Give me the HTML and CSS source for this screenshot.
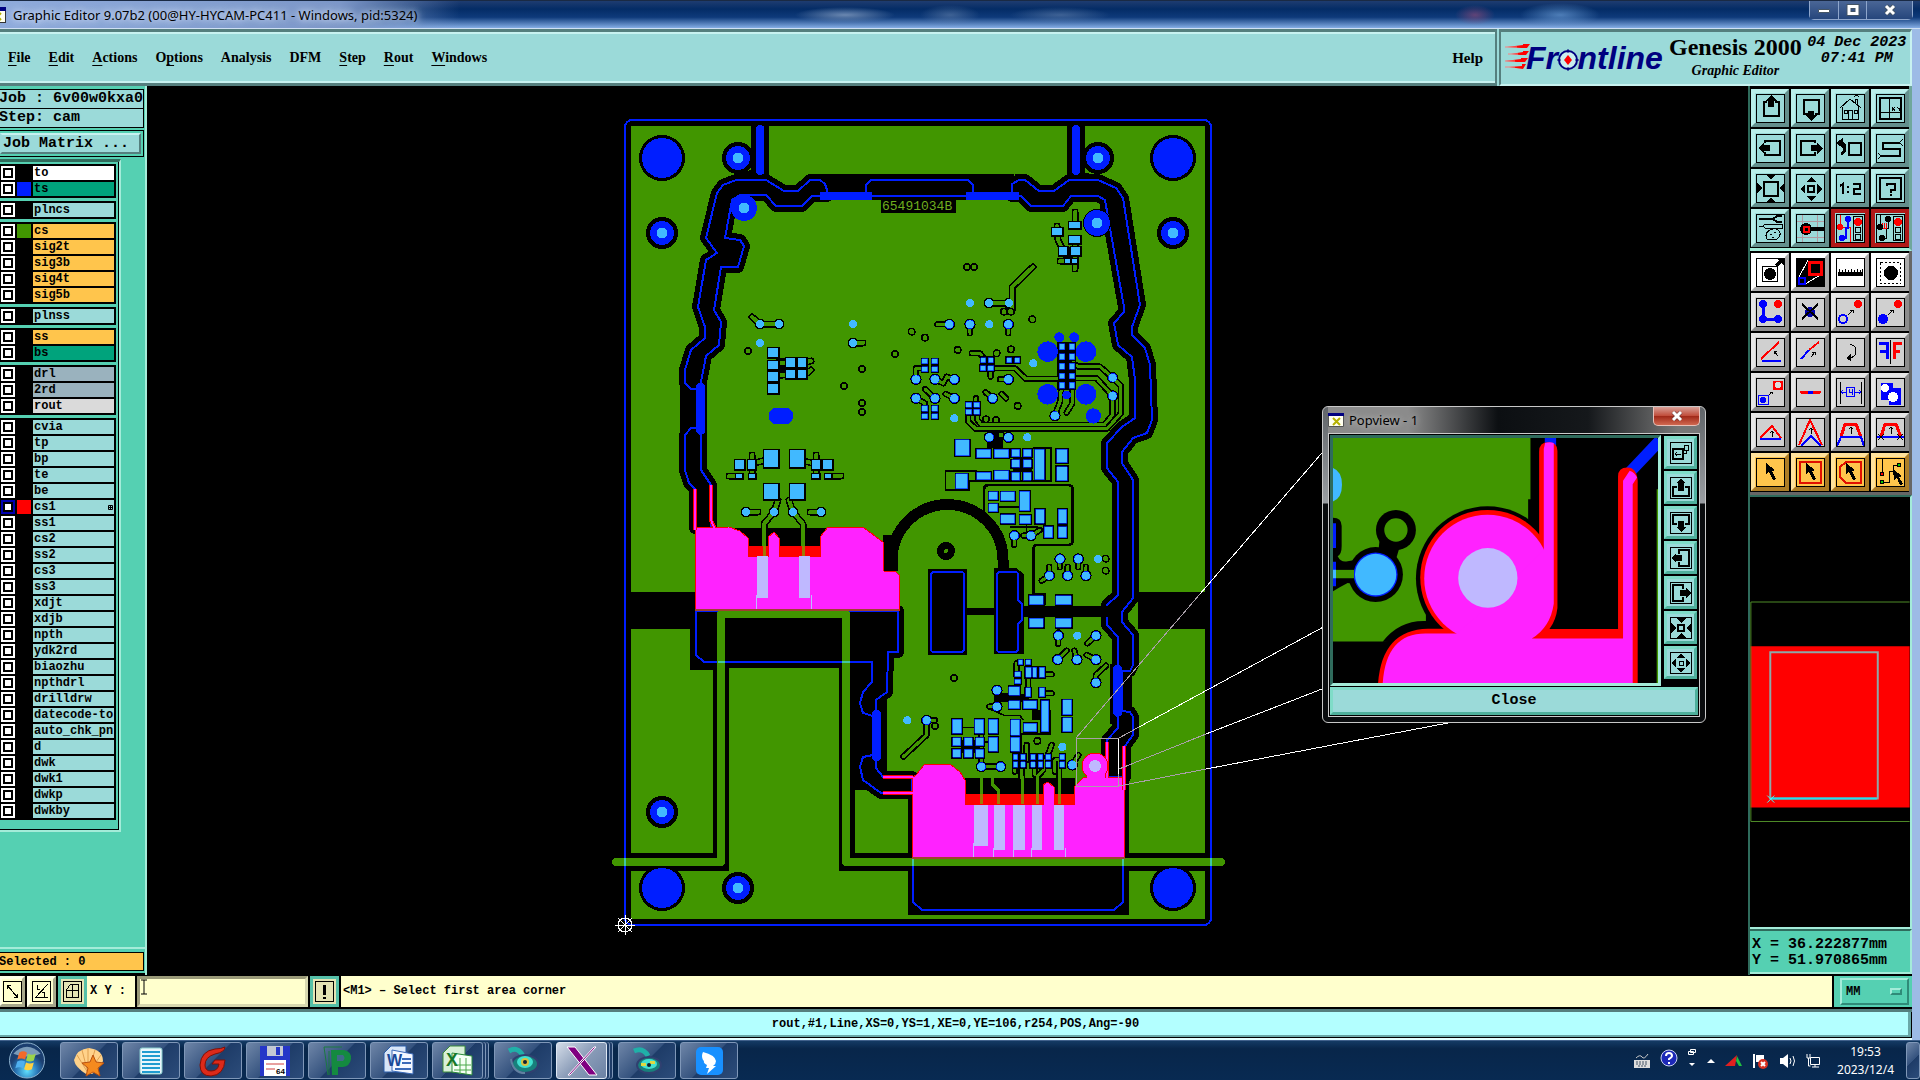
FILE: index.html
```html
<!DOCTYPE html>
<html lang="en">
<head>
<meta charset="utf-8">
<title>Graphic Editor 9.07b2</title>
<link rel="stylesheet" href="styles.css">
</head>
<body>
<header class="titlebar">
  <svg class="app-icon" width="12" height="16" viewBox="4 0 12 16"><rect width="15" height="15" x=".5" y=".5" fill="#fffff0" stroke="#333"/><path d="M0 0h16v4H0z" fill="#000080"/><path d="M4 6l7 7M11 6l-7 7" stroke="#b5b000" stroke-width="2"/></svg>
  <h1 class="title-text">Graphic Editor 9.07b2 (00@HY-HYCAM-PC411 - Windows, pid:5324)</h1>
  <div class="window-buttons">
    <button aria-label="Minimize"><svg width="14" height="12"><path d="M1.500 5.500h11v3h-11z" fill="#fff" stroke="#456"/></svg></button>
    <button aria-label="Maximize"><svg width="14" height="12"><path d="M3 2.500h8v7H3z" fill="none" stroke="#456" stroke-width="5"/><path d="M3 2.500h8v7H3z" fill="none" stroke="#fff" stroke-width="3"/></svg></button>
    <button class="wide" aria-label="Close"><svg width="14" height="12"><path d="M3 2l8 8M11 2l-8 8" stroke="#456" stroke-width="5"/><path d="M3 2l8 8M11 2l-8 8" stroke="#fff" stroke-width="3"/></svg></button>
  </div>
</header>

<div class="app">
<div class="top">
  <nav class="menubar">
    <a href="#"><u>F</u>ile</a><a href="#"><u>E</u>dit</a><a href="#"><u>A</u>ctions</a><a href="#">O<u>p</u>tions</a><a href="#">Analysis</a><a href="#">DFM</a><a href="#"><u>S</u>tep</a><a href="#"><u>R</u>out</a><a href="#"><u>W</u>indows</a>
    <a href="#" class="help">Help</a>
  </nav>
  <div class="brand">
    <svg width="162" height="36" viewBox="0 0 162 36" aria-label="Frontline">
      <g fill="#f00"><path d="M2 7l16-2V4h7l-3 4H16zM6 14l12-2v-1h6l-3 4h-6zM0 21l16-2v-1h7l-3 4h-8zM4 27l13-1v-2h4l-3 5z"/></g>
      <path d="M0 7h12M3 14h10M0 21h10M0 27h10" stroke="#fa8080"/>
      <text x="21" y="29" class="logo-text">Fr<tspan fill="none">o</tspan>ntline</text>
      <circle cx="63" cy="20" r="9" fill="#c9efee" stroke="#000080" stroke-width="2"/><path d="M63 15l4 5-4 5-4-5z" fill="#f00"/><path d="M63 9v4m0 14v4M52 20h4m14 0h4" stroke="#000080"/>
    </svg>
    <div class="product"><strong>Genesis 2000</strong><em>Graphic Editor</em></div>
    <time class="stamp">04 Dec 2023<br>07:41 PM</time>
  </div>
</div>

<div class="main">
<aside class="left">
  <div class="job"><div>Job : 6v00w0kxa0</div><div>Step: cam</div></div>
  <div class="matrix"><button>Job Matrix ...</button></div>
  <div class="layers">
    <div class="group">
      <label class="layer"><input type="checkbox"><i></i><span class="white">to</span></label>
      <label class="layer"><input type="checkbox"><i class="blue"></i><span class="green">ts</span></label>
    </div>
    <div class="group"><label class="layer"><input type="checkbox"><i></i><span>plncs</span></label></div>
    <div class="group">
      <label class="layer"><input type="checkbox"><i class="leaf"></i><span class="amber">cs</span></label>
      <label class="layer"><input type="checkbox"><i></i><span class="amber">sig2t</span></label>
      <label class="layer"><input type="checkbox"><i></i><span class="amber">sig3b</span></label>
      <label class="layer"><input type="checkbox"><i></i><span class="amber">sig4t</span></label>
      <label class="layer"><input type="checkbox"><i></i><span class="amber">sig5b</span></label>
    </div>
    <div class="group"><label class="layer"><input type="checkbox"><i></i><span>plnss</span></label></div>
    <div class="group">
      <label class="layer"><input type="checkbox"><i></i><span class="amber">ss</span></label>
      <label class="layer"><input type="checkbox"><i></i><span class="green">bs</span></label>
    </div>
    <div class="group">
      <label class="layer"><input type="checkbox"><i></i><span class="slate">drl</span></label>
      <label class="layer"><input type="checkbox"><i></i><span class="slate">2rd</span></label>
      <label class="layer"><input type="checkbox"><i></i><span class="pale">rout</span></label>
    </div>
    <div class="group">
      <label class="layer"><input type="checkbox"><i></i><span>cvia</span></label>
      <label class="layer"><input type="checkbox"><i></i><span>tp</span></label>
      <label class="layer"><input type="checkbox"><i></i><span>bp</span></label>
      <label class="layer"><input type="checkbox"><i></i><span>te</span></label>
      <label class="layer"><input type="checkbox"><i></i><span>be</span></label>
      <label class="layer"><input type="checkbox" class="current"><i class="red"></i><span class="work">cs1<svg width="5" height="5" viewBox="0 0 5 5"><path d="M.5.5h4v4h-4zM2.500 0v5M0 2.500h5" fill="none" stroke="#000"/></svg></span></label>
      <label class="layer"><input type="checkbox"><i></i><span>ss1</span></label>
      <label class="layer"><input type="checkbox"><i></i><span>cs2</span></label>
      <label class="layer"><input type="checkbox"><i></i><span>ss2</span></label>
      <label class="layer"><input type="checkbox"><i></i><span>cs3</span></label>
      <label class="layer"><input type="checkbox"><i></i><span>ss3</span></label>
      <label class="layer"><input type="checkbox"><i></i><span>xdjt</span></label>
      <label class="layer"><input type="checkbox"><i></i><span>xdjb</span></label>
      <label class="layer"><input type="checkbox"><i></i><span>npth</span></label>
      <label class="layer"><input type="checkbox"><i></i><span>ydk2rd</span></label>
      <label class="layer"><input type="checkbox"><i></i><span>biaozhu</span></label>
      <label class="layer"><input type="checkbox"><i></i><span>npthdrl</span></label>
      <label class="layer"><input type="checkbox"><i></i><span>drilldrw</span></label>
      <label class="layer"><input type="checkbox"><i></i><span>datecode-to</span></label>
      <label class="layer"><input type="checkbox"><i></i><span>auto_chk_pnl</span></label>
      <label class="layer"><input type="checkbox"><i></i><span>d</span></label>
      <label class="layer"><input type="checkbox"><i></i><span>dwk</span></label>
      <label class="layer"><input type="checkbox"><i></i><span>dwk1</span></label>
      <label class="layer"><input type="checkbox"><i></i><span>dwkp</span></label>
      <label class="layer"><input type="checkbox"><i></i><span>dwkby</span></label>
    </div>
  </div>
  <div class="filler"></div>
  <div class="selected"><div>Selected : 0</div></div>
</aside>

<section class="canvas">
<svg class="board" viewBox="147 86 1601 889" preserveAspectRatio="xMinYMin meet">
  <defs>
    <path id="channel-left" d="M827 196V190L825 184 820 180H810L798 191H784L766 180H736L723 185 717 193 706 238 717 253 706 260 698 307 705 327V338L691 350 685 370V383L691 389H701V428H691L685 435V470L689 483 695 489V528H711V485L701 470V382L706 356 719 345 721 322 714 310 721 267H738L744 246 740 240 725 238 732 200 740 195H766L776 206H802L812 196Z"/>
    <path id="channel-right" d="M1012 196V184L1019 180H1025L1039 191H1054L1069 180H1098L1116 188 1123 198 1140 305 1132 327V335L1145 348 1150 365 1152 420 1147 433 1133 438 1122 452V463L1133 480V598L1122 612V622L1133 635V665L1130 671H1122V711L1130 712 1133 717V735L1125 746V777H1107V740L1118 728V637L1107 625V605L1118 595V482L1107 468V443L1122 427 1135 418V380L1132 357 1118 345 1114 323 1124 312V307L1105 200 1098 196H1071L1063 206H1031L1021 196Z"/>
    <path id="channel-mid" d="M696 611V655L704 662H872V682L863 692 860 703 863 713 873 716V755L863 757 860 767 863 780 881 793H912V777H883L876 768V700L887 692 888 652H898V611Z"/>
    <path id="plate-a" d="M695 528L729 527 740 531 748 538V556H768V537L774 532 779 538V556H820V537L828 527H863L871 533 883 542 884 571H895L899 575V610H695Z"/>
    <path id="plate-b" d="M912 778L916 775 924 765 950 764 960 772 965 780V804H1043V785L1048 782 1054 787V804H1074V787L1084 777H1124V750V858H912Z"/>
    <path id="traces" d="M275 175H345L378 207H485M520 145V160L535 170H600L638 203M515 205H590L638 258M205 320V335L228 357H620L663 310V228L640 205M232 310V330L245 345H612L638 315V260M485 225L480 275 465 315M517 225V280L500 308M148 43H112M210 43V70M325 43V70M215 130H240L255 150M272 175V200M325 208H300M48 208V175H75M105 208L130 220 140 200 163 208M75 237L105 265M137 252L163 265M48 265L75 280V300M257 247L278 265M305 252L318 265M228 265V300M480 747V772M535 747V772M448 797V770M503 797V770M558 797V770M448 797L425 812M475 977V1002M588 977L562 1000M473 1049L500 1022M531 1049L523 1022M588 1049L560 1035M588 1118V1095L618 1067M343 677V705M80 1231V1275L10 1340M80 1231H105M244 1370H302M291 1190H268M435 1093H455M430 1150H455M385 1110V1130M350 1060V1100M380 1305V1350M455 1305L440 1345M405 1365V1395M465 1385V1350H485M345 1360V1385M535 1335L517 1365M370 677H393L420 660M244 1250V1370M365 1370V1405M412 1400L430 1380V1350M478 1405V1350"/>
    <path id="vias" d="M35 65h0M75 83h0M173 120h0M397 28h0M333 118h0M290 130h0M353 288h0M258 328h0M288 330h0M312 5h0M332 5h0M617 746h0M617 782h0M162 1104h0M105 1248h0M412 1293h0M303 375h0"/>
    <path id="ringed" d="M148 43h0M210 43h0M325 43h0M48 208h0M105 208h0M163 208h0M325 208h0M48 265h0M105 265h0M163 265h0M278 265h0M638 203h0M638 258h0M465 317h0M268 382h0M325 382h0M343 677h0M393 677h0M480 747h0M535 747h0M448 797h0M503 797h0M558 797h0M475 977h0M588 977h0M473 1049h0M531 1049h0M588 1049h0M588 1118h0M291 1141h0M291 1190h0M80 1231h0M244 1370h0M302 1370h0M517 1365h0"/>
    <path id="pads" d="M478 102h17v18h-17zM508 102h17v18h-17zM478 131h17v18h-17zM508 131h17v18h-17zM478 160h17v18h-17zM508 160h17v18h-17zM478 190h17v16h-17zM508 190h17v16h-17zM478 217h17v18h-17zM508 217h17v18h-17zM66 147h18v14h-18zM96 147h18v14h-18zM66 170h18v16h-18zM96 170h18v16h-18zM66 288h18v16h-18zM96 288h18v16h-18zM66 312h18v15h-18zM96 312h18v15h-18zM243 143h15v15h-15zM265 143h15v15h-15zM241 167h17v16h-17zM264 167h17v16h-17zM320 143h15v15h-15zM344 143h15v15h-15zM198 277h17v15h-17zM222 277h17v15h-17zM198 298h17v15h-17zM222 298h17v15h-17zM166 390h42v47h-42zM230 418h43v26h-43zM283 418h43v26h-43zM335 418h24v22h-24zM370 418h24v22h-24zM405 418h28v92h-28zM470 418h32v40h-32zM335 450h24v22h-24zM370 450h24v22h-24zM470 470h32v42h-32zM230 487h43v22h-43zM283 483h43v26h-43zM335 487h24v24h-24zM370 487h24v24h-24zM168 492h36v45h-36zM267 546h26v24h-26zM303 546h42v26h-42zM360 544h30v58h-30zM267 582h26v24h-26zM303 614h42v26h-42zM360 616h32v26h-32zM407 598h26v42h-26zM433 650h26v34h-26zM475 598h26v42h-26zM475 650h26v34h-26zM388 857h42v27h-42zM468 857h46v27h-46zM388 925h42v27h-42zM468 925h46v27h-46zM355 1050h14v14h-14zM378 1050h14v14h-14zM345 1086h17v15h-17zM345 1108h17v14h-17zM377 1072h17v30h-17zM398 1072h13v30h-13zM418 1072h17v30h-17zM327 1130h32v26h-32zM377 1134h15v26h-15zM418 1134h17v26h-17zM327 1172h33v24h-33zM370 1172h40v24h-40zM424 1172h22v94h-22zM488 1170h28v44h-28zM488 1224h28v42h-28zM372 1240h38v26h-38zM157 1228h28v42h-28zM225 1228h27v42h-27zM267 1228h27v42h-27zM333 1230h27v46h-27zM158 1284h24v24h-24zM193 1284h24v24h-24zM228 1284h24v24h-24zM267 1282h27v42h-27zM333 1282h27v42h-27zM158 1318h24v24h-24zM193 1318h24v24h-24zM228 1318h24v24h-24zM340 1333h14v16h-14zM362 1333h14v16h-14zM340 1356h14v16h-14zM362 1356h14v16h-14zM392 1333h14v16h-14zM415 1333h14v16h-14zM438 1333h14v16h-14zM392 1356h14v16h-14zM415 1356h14v16h-14zM438 1356h14v16h-14zM480 1333h14v16h-14zM480 1356h14v16h-14z"/>
    <path id="pads-left" d="M768 348h10v9h-10zM768 361h10v8h-10zM768 372h10v9h-10zM768 384h10v9h-10zM786 358h9v9h-9zM798 358h8v9h-8zM786 370h9v8h-9zM798 370h8v8h-8zM764 450h14v17h-14zM790 450h14v17h-14zM735 460h9v9h-9zM748 460h7v9h-7zM812 460h8v9h-8zM823 460h9v9h-9zM736 474h6v4h-6zM749 474h6v4h-6zM812 474h7v4h-7zM825 474h6v4h-6zM764 484h14v15h-14zM790 484h14v15h-14zM1069 222h11v6h-11zM1052 228h10v7h-10zM1069 236h11v7h-11zM1059 247h8v8h-8zM1071 247h9v8h-9zM1065 259h5v4h-5zM1072 259h5v4h-5z"/>
    <path id="traces-left" d="M752 317L760 324H779M853 343H863M806 362L811 361M806 374L811 370M778 364L787 362M778 376L787 374M752 465V455M816 465V455M755 463L766 460M812 463L800 460M729 476H738M828 476H841M752 470V476M816 470V476M746 512H758M821 512H810M764 556V524L774 512 778 500M803 556V524L793 512 789 500M1033 267L1012 287V311M989 303H1009M1075 212V224M1057 226L1058 240 1063 250M1075 243V269M1060 261H1066"/>
    <path id="vias-left" d="M748 351h0M895 354h0M862 369h0M844 386h0M862 403h0M862 412h0M967 267h0M974 267h0M1007 311h0"/>
    <path id="dots-left" d="M760 324h0M779 324h0M853 343h0M746 512h0M774 512h0M793 512h0M821 512h0M989 303h0M1009 303h0"/>
  </defs>

  <path class="green" d="M631 126H1205V919H631z"/>
  <path class="black" d="M751 120h18v68h-18zM1067 120h18v68h-18zM735 176l20-8 14 20h-34zM1067 168l40 10-10 10h-30zM820 174h199v26H820zM805 184l20-10v22zM1034 184l-20-10v22zM680 382h22v56h-22zM631 592h66v37h-66zM1138 592h68v37h-68zM1110 664h22v60h-22z"/>
  <!-- milled areas and slots -->
  <path class="black" d="M713 610h142v256H713zM690 605h210v45h-12v20H690zM855 650h32v140h-32zM631 853h98v18h-98zM838 853h368v18H838zM908 793h221v122H908zM735 528h95v20h-95zM955 778h120v20h-120zM883 535h13v36h-13zM1120 745h9v120h-9z"/>
  <path class="green" d="M729 667h110v210H729zM855 790h53v63h-53z"/>
  <g class="edge">
    <use href="#channel-left" class="clearance"/><use href="#channel-right" class="clearance"/><use href="#channel-mid" class="clearance"/>
    <use href="#channel-left" class="rout"/><use href="#channel-right" class="rout"/><use href="#channel-mid" class="rout"/>
    <path class="rout" d="M866 194V185L871 180H968L973 185V194"/><path class="blue-line" d="M820 196H1020"/>
    <path class="rout" d="M913 858V902L922 910H1114L1123 902V858"/>
    <rect class="blue-line" x="625" y="120" width="586" height="805" rx="7"/>
  </g>
  <path class="blue-fill" d="M756 127q4-5 8 0v46q-4 5-8 0zM1072 127q4-5 8 0v46q-4 5-8 0zM820 192h52v8h-52zM966 192h53v8h-53zM696 385q5-5 9 0v47q-4 6-9 0zM872 712q4-5 9 0v47q-4 5-9 0zM1113 667q4-5 9 0v47q-4 6-9 0z"/>

  <!-- keyhole clip and contact slots -->
  <path d="M892 571V560A54 54 0 0 1 1003 560V575" fill="none" stroke="#000" stroke-width="11"/>
  <circle cx="946" cy="551" r="9"/><circle cx="946" cy="551" r="2" class="green"/>
  <path class="black" d="M928 569h39v86h-39zM994 568h22l8 6v80h-30zM964 608h34v7h-34zM1020 606h88v11h-88z"/>
  <rect class="rout" x="931" y="572" width="33" height="80" rx="3"/>
  <path class="rout" d="M997 575q0-3 3-3h15q3 0 3 3v25l4 4v16l-4 4v25q0 3-3 3h-15q-3 0-3-3z"/>

  <!-- tooling holes -->
  <g class="black"><circle cx="662" cy="158" r="23"/><circle cx="1173" cy="158" r="23"/><circle cx="662" cy="888" r="23"/><circle cx="1173" cy="888" r="23"/><circle cx="738" cy="158" r="16"/><circle cx="1098" cy="158" r="16"/><circle cx="662" cy="233" r="16"/><circle cx="1173" cy="233" r="16"/><circle cx="662" cy="812" r="16"/><circle cx="738" cy="888" r="16"/><circle cx="1097" cy="223" r="14"/></g>
  <g class="blue-fill"><circle cx="662" cy="158" r="20"/><circle cx="1173" cy="158" r="20"/><circle cx="662" cy="888" r="20"/><circle cx="1173" cy="888" r="20"/><circle cx="738" cy="158" r="12"/><circle cx="1098" cy="158" r="12"/><circle cx="662" cy="233" r="12"/><circle cx="1173" cy="233" r="12"/><circle cx="662" cy="812" r="12"/><circle cx="738" cy="888" r="12"/><circle cx="744" cy="208" r="13"/><circle cx="1097" cy="223" r="13"/><rect x="769" y="408" width="24" height="16" rx="7"/></g>
  <path class="dots" stroke-width="11" d="M738 158h0M1098 158h0M662 233h0M1173 233h0M662 812h0M738 888h0M744 208h0M1097 223h0"/>
  <path class="black" d="M881 197h75v16h-75z"/>
  <text x="882" y="210" class="part-no">65491034B</text>

  <!-- left half components -->
  <path class="black" d="M776 358h12v20h-12zM792 362h8v12h-8zM1063 247h16v16h-16z"/>
  <g class="net"><use href="#traces-left" stroke="#000" stroke-width="7"/><use href="#vias-left" stroke="#000" stroke-width="8"/><use href="#dots-left" stroke="#000" stroke-width="11"/><use href="#traces-left" stroke="#419600" stroke-width="4"/><use href="#vias-left" stroke="#419600" stroke-width="5"/><use href="#dots-left" stroke="#41b9ff" stroke-width="8"/><path stroke="#41b9ff" stroke-width="8" d="M760 343h0M853 324h0M970 303h0"/></g>
  <use href="#pads-left" fill="#41b9ff" stroke="#000" stroke-width="3"/><use href="#pads-left" fill="#41b9ff"/>

  <!-- right half components, drawn on a grid of thirds -->
  <g transform="translate(900 310) scale(.33333)">
    <path class="black" d="M472 96h56v145h-56zM262 366h48v48h-48zM340 440h55v45h-55zM183 1290h60v40h-60zM283 1150h60l45 5v20h-105zM395 1200h50v30h-50zM398 1340h48v22h-48zM350 1340h20v22h-20z"/>
    <path class="wire" stroke-width="5" d="M230 483H137V541H208V513H453V414H400M295 592H362M330 652H413M380 640V672M185 1253H225M365 1340V1272H450V1200M270 1197L315 1217H360L370 1230M185 1296H270M358 1110V1165H330"/>
    <path class="wire" stroke-width="8" d="M252 615V540Q252 525 267 525H503Q518 525 518 540V690Q518 705 503 705H412Q400 705 400 718V852H434V885"/>
    <path class="wire" stroke-width="9" d="M475 955V977M385 355H240"/>
    <g class="net"><use href="#traces" stroke="#000" stroke-width="19"/><use href="#vias" stroke="#000" stroke-width="24"/><use href="#ringed" stroke="#000" stroke-width="34"/><use href="#traces" stroke="#419600" stroke-width="9"/><use href="#vias" stroke="#419600" stroke-width="15"/><use href="#ringed" stroke="#001eff" stroke-width="28"/><use href="#ringed" stroke="#41b9ff" stroke-width="24"/><path stroke="#41b9ff" stroke-width="24" d="M268 43h0M400 160h0M163 325h0M382 382h0M594 747h0M532 977h0M22 1231h0M487 1311h0"/></g>
    <use href="#pads" fill="#41b9ff" stroke="#000" stroke-width="8"/><use href="#pads" fill="#41b9ff" stroke="#001eff" stroke-width="2"/>
    <g class="blue-fill"><circle cx="443" cy="125" r="31"/><circle cx="558" cy="125" r="31"/><circle cx="443" cy="253" r="31"/><circle cx="558" cy="253" r="31"/><circle cx="580" cy="318" r="23"/><circle cx="478" cy="82" r="15"/><circle cx="523" cy="82" r="15"/><circle cx="500" cy="255" r="13"/></g>
  </g>

  <!-- copper plates -->
  <path fill="#f00" d="M748 546h73v11h-73zM965 794h109v11H965z"/>
  <use href="#plate-a" class="plate"/><use href="#plate-b" class="plate"/>
  <g fill="none"><path stroke="#f00" stroke-width="4" d="M695 489V530M711 485V520L715 528M883 777H913M883 793H913M1107 742V778M1124 746V790"/><path stroke="#ff22ff" stroke-width="2" d="M695 489V530M711 485V520L715 530M883 777H913M883 793H913M1107 742V780M1124 746V790"/></g>
  <circle cx="1095" cy="766" r="13" class="plate"/><circle cx="1095" cy="766" r="6" fill="#bfb8ff"/><path fill="#ff22ff" d="M1087 774h18v10h-18z"/>
  <path fill="#bfb8ff" d="M757 556h11v42h-11zM799 556h11v42h-11zM756 595h1v15h-1zM811 595h1v15h-1zM974 805h14v41h-14zM994 805h11v45h-11zM1013 805h12v45h-12zM1032 805h10v45h-10zM1054 805h10v45h-10zM973 843h1v15h-1zM993 848h1v10h-1zM1013 848h1v10h-1zM1031 848h1v10h-1zM1065 848h1v10h-1z"/>
  <path fill="none" stroke="#419600" stroke-width="3" d="M764 528V546M803 528V546M981 772V794M992 778V784L998 790V794M1022 776V794M1037 778V794M1059 776V794"/>
  <path fill="none" stroke="#a07800" stroke-width="3" d="M764 546V556M803 546V556M981 794V804M998 794V804M1022 794V804M1037 794V804M1059 794V804"/>
  <path fill="none" stroke="#419600" stroke-width="8" stroke-linecap="round" stroke-linejoin="round" d="M616 862H721V614H846V862H1221"/>
  <path stroke="#41c8a0" stroke-width="2" d="M718 662h7M842 662h8M625 858v8M1211 858v8M913 858v8M1123 858v8"/>
  <path stroke="#a04030" stroke-width="2" d="M695 610H899M912 858H1125"/>

  <!-- magnifier frame and leader lines -->
  <g fill="none" stroke="#a9a0a9"><path d="M1076.500 738.500h42v48h-42zM1076 738L1200 594M1119 769L1206 734M1119 786L1206 769M1119 738L1139 727"/><path stroke="#fff" d="M1200 594L1340 432M1139 727L1340 618M1206 734L1340 682M1206 769L1448 723M1118.500 739v35"/></g>
  <g fill="none" stroke="#fff"><circle cx="625" cy="925" r="7"/><path d="M615 925h20M625 915v20M618 918l14 14M632 918l-14 14"/></g>
</svg>

<div class="popview" role="dialog" aria-labelledby="pop-title">
  <div class="pop-head">
    <svg width="16" height="14" viewBox="0 0 16 14"><path d="M.5.5h15v13H.5z" fill="#fffff0" stroke="#555"/><path d="M0 0h16v3H0z" fill="#000080"/><path d="M5 5l7 7M12 5l-7 7" stroke="#b5b000" stroke-width="2"/></svg>
    <h2 id="pop-title">Popview - 1</h2>
    <button class="pop-x" aria-label="Close window"><svg width="12" height="10"><path d="M2 1l8 8M10 1l-8 8" stroke="#633" stroke-width="4"/><path d="M2 1l8 8M10 1l-8 8" stroke="#fff" stroke-width="3"/></svg></button>
  </div>
  <div class="pop-body">
    <div class="pop-row">
      <svg class="pop-view" viewBox="69 117 976 732" preserveAspectRatio="none">
        <path fill="#419600" d="M69 117H662V725H69zM1041 270h4v579h-4z"/>
        <path d="M69 355q26 0 26 25v60q0 25-12 30 10 20 30 15l30-5v75l-30-5q-20 10-44 25z"/>
        <circle cx="258" cy="392" r="60"/><circle cx="258" cy="392" r="35" fill="#419600"/><circle cx="197" cy="525" r="82"/><path d="M205 460l5-50 60 30-15 50z"/><circle cx="197" cy="525" r="66" fill="#001eff"/><circle cx="197" cy="525" r="62" fill="#41b9ff"/>
        <path fill="#419600" d="M78 511h54v25H78z"/><path fill="#001eff" d="M69 372h9v74h-9zM69 487h9v73h-9z"/><path fill="#41b9ff" d="M69 511h9v25h-9zM69 207q27 10 27 50t-27 50z"/>
        <circle cx="533" cy="536" r="215"/><path d="M218 726q50-65 130-62v-30l60 60v40zM655 300h90v200h-90z"/>
        <path fill="none" stroke="#001eff" stroke-width="34" d="M722 100v40M955 225l95-100"/>
        <path fill="#f00" d="M688 158q0-28 28-28t27 28v467q-4 36-24 63h206V232q0-27 28-27t31 40v610H204q10-165 150-168h334z"/><circle cx="533" cy="534" r="202" fill="#f00"/>
        <circle cx="533" cy="536" r="190" fill="#ff22ff"/>
        <path fill="#ff22ff" d="M702 150l4-18q14-4 26 0v480q-10 70-66 104H940V245l20-30q15 5 22 20l-13 20v600H218q8-155 130-154h92l60-50 202-200z"/>
        <circle cx="534" cy="535" r="89" fill="#bfb8ff"/>
      </svg>
      <div class="pop-tools">
        <button aria-label="Pop out"><svg class="ico" viewBox="0 0 22 22"><path d="M3 7h10v10H3z" fill="none" stroke="#000" stroke-width="2"/><path d="M14.500 3.500h4v5h-4zM13 11h3V9M5 12h6M5 12l2-2M5 12l2 2" fill="none" stroke="#000"/></svg></button>
        <button aria-label="Pan up"><svg class="ico" viewBox="0 0 22 22"><path d="M7 10H3v9h16v-9h-4" fill="none" stroke="#000" stroke-width="2"/><path d="M11 2l5 4h-2v8H8V6H6z"/></svg></button>
        <button aria-label="Pan down"><svg class="ico" viewBox="0 0 22 22"><path d="M7 12H3V3h16v9h-4" fill="none" stroke="#000" stroke-width="2"/><path d="M11 20l5-5h-2V9H8v6H6z"/></svg></button>
        <button aria-label="Pan left"><svg class="ico" viewBox="0 0 22 22"><path d="M9 7V3h10v16H9v-4" fill="none" stroke="#000" stroke-width="2"/><path d="M1 11l5-5v2h6v6H6v2z"/></svg></button>
        <button aria-label="Pan right"><svg class="ico" viewBox="0 0 22 22"><path d="M13 7V3H3v16h10v-4" fill="none" stroke="#000" stroke-width="2"/><path d="M21 11l-5-5v2h-6v6h6v2z"/></svg></button>
        <button aria-label="Zoom out"><svg class="ico" viewBox="0 0 22 22"><path d="M8 8h6v6H8z" fill="none" stroke="#000" stroke-width="2"/><path d="M6 1h10l-5 5zM6 21h10l-5-5zM1 6v10l5-5zM21 6v10l-5-5z"/></svg></button>
        <button aria-label="Zoom in"><svg class="ico" viewBox="0 0 22 22"><path d="M9 9h4v4H9z" fill="none" stroke="#000"/><path d="M11 1l4 5H7zM11 21l4-5H7zM1 11l5-4v8zM21 11l-5-4v8z"/></svg></button>
      </div>
    </div>
    <button class="pop-close">Close</button>
  </div>
</div>
</section>

<aside class="right">
  <div class="tools view-tools">
    <button aria-label="Pan up"><svg class="ico" viewBox="0 0 29 29"><path d="M11 8H8v14h15V8h-4" fill="none" stroke="#000" stroke-width="2"/><path d="M15 1l6 6h-3v6h-6V7H9z"/></svg></button>
    <button aria-label="Pan down"><svg class="ico" viewBox="0 0 29 29"><path d="M12 20H8V6h15v14h-4" fill="none" stroke="#000" stroke-width="2"/><path d="M15 27l6-6h-3v-4h-6v4H9z"/></svg></button>
    <button aria-label="Home"><svg class="ico" viewBox="0 0 29 29" fill="none" stroke="#000"><path d="M4 14L14 5l11 9M6.500 12.500v13h16v-13M12.500 25v-9h4v9M8.500 16.500h3v3h-3zM18.500 16.500h3v3h-3zM19.500 9V5h2v6M18 3q3-3 5 0"/></svg></button>
    <button aria-label="Zoom to XY"><svg class="ico" viewBox="0 0 29 29" fill="none" stroke="#000"><path d="M4 4h21v21H4z" stroke-width="2"/><path d="M13.500 3v22M3 18.500h22M16 13l3 4M19 13l-3 4M21 13l2 2 2-2M23 15v2"/></svg></button>
    <button aria-label="Pan left"><svg class="ico" viewBox="0 0 29 29"><path d="M9 9V7h15v14H9v-3" fill="none" stroke="#000" stroke-width="2"/><path d="M2 14l6-5v2h6v6H8v3z"/></svg></button>
    <button aria-label="Pan right"><svg class="ico" viewBox="0 0 29 29"><path d="M19 9V7H5v14h14v-3" fill="none" stroke="#000" stroke-width="2"/><path d="M27 14l-6-5v2h-6v6h6v3z"/></svg></button>
    <button aria-label="Previous view"><svg class="ico" viewBox="0 0 29 29" fill="none" stroke="#000"><path d="M13 9h12v12H13z" stroke-width="2"/><path d="M2 9h4q3 1 3 5t-4 6" stroke-width="3"/><path d="M1 9l5-4v8z" fill="#000"/></svg></button>
    <button aria-label="Profile"><svg class="ico" viewBox="0 0 29 29" fill="none" stroke="#000"><path d="M24 9H7v6h17v7H5" stroke-width="2"/><path d="M24 8l3-3M24 9l3 3M5 22l-3-3M5 22l-3 3"/></svg></button>
    <button aria-label="Zoom out"><svg class="ico" viewBox="0 0 29 29"><path d="M8 8h14v14H8z" fill="none" stroke="#000" stroke-width="2"/><path d="M10 1h10l-5 4zM10 28h10l-5-4zM1 9v10l5-5zM28 9v10l-5-5z"/></svg></button>
    <button aria-label="Zoom in"><svg class="ico" viewBox="0 0 29 29"><path d="M12 12h6v6h-6z" fill="none" stroke="#000" stroke-width="2"/><path d="M15 3l5 5H10zM15 27l5-5H10zM4 15l5-5v10zM26 15l-5-5v10z"/></svg></button>
    <button aria-label="One to two"><svg class="ico" viewBox="0 0 29 29" fill="none" stroke="#000" stroke-width="2"><path d="M4 12l3-2v10M12 12v2M12 17v2M17 10h7v5h-6v5h7"/></svg></button>
    <button aria-label="Query"><svg class="ico" viewBox="0 0 29 29" fill="none" stroke="#000" stroke-width="2"><path d="M4 4h21v21H4zM11 12v-2h8v6h-4v3M15 20v2"/></svg></button>
    <button aria-label="Options"><svg class="ico" viewBox="0 0 29 29" fill="none" stroke="#000"><path d="M3 5h14" stroke-width="2"/><path d="M26 2h-5l-4 3 4 3h5" stroke-width="2"/><path d="M3 12h4l2-2h17v4H9l-2-2M11 25q-3-6 3-9t9 1-2 8z"/><path d="M14 20h2M18 18h2M16 23h2"/></svg></button>
    <button aria-label="Snap"><svg class="ico" viewBox="0 0 29 29"><path d="M0 7h29M0 23h29M6 0v29M21 0v29" stroke="#b09aa0"/><circle cx="10" cy="15" r="6"/><path d="M16 13h12v4H16z"/><path d="M8 13h5v5H8z" fill="none" stroke="#f00" stroke-width="2"/></svg></button>
    <button class="hot" aria-label="Net check"><svg class="ico" viewBox="0 0 29 29"><path d="M4 0v13h10v15" fill="none" stroke="#f00"/><path d="M12 5v9h-2v10H7" fill="none" stroke="#00f" stroke-width="2"/><circle cx="4" cy="13" r="3" fill="#f00"/><circle cx="12" cy="5" r="3" fill="#00f"/><circle cx="6" cy="24" r="3" fill="#00f"/><path d="M17.500 2.500h9v24h-9z" fill="none" stroke="#000"/><circle cx="22" cy="8" r="4" fill="#f00"/><circle cx="22" cy="16" r="3" fill="none" stroke="#000"/><circle cx="22" cy="23" r="3" fill="none" stroke="#000"/></svg></button>
    <button class="hot" aria-label="Net measure"><svg class="ico" viewBox="0 0 29 29"><path d="M4 0v13M12 5v9h-2v10H7" fill="none" stroke="#000"/><path d="M6 14V9M8 14V9M10 14V9M5 14h6" stroke="#f00"/><circle cx="4" cy="13" r="3"/><circle cx="12" cy="5" r="3"/><circle cx="6" cy="24" r="3"/><path d="M17.500 2.500h9v24h-9z" fill="none" stroke="#000"/><circle cx="22" cy="8" r="4" fill="#f00"/><circle cx="22" cy="16" r="3" fill="none" stroke="#000"/><circle cx="22" cy="23" r="3" fill="none" stroke="#000"/></svg></button>
  </div>
  <div class="tools edit-tools">
    <button class="on" aria-label="Add feature"><svg class="ico" viewBox="0 0 29 29"><path d="M6.500 8.500h15v15h-15z" fill="none" stroke="#000"/><circle cx="14" cy="16" r="6"/><path d="M20 8l6-6" stroke="#000" stroke-width="3"/><path d="M21 1h7v7z"/></svg></button>
    <button class="on" aria-label="Popview"><svg class="ico" viewBox="0 0 29 29"><path d="M1 1h27v27H1z"/><path d="M12 2L3 19M26 16L9 26" stroke="#fff"/><path d="M13 4h12v12H13z" fill="none" stroke="#f00" stroke-width="3"/><path d="M3 20h6v6H3z" fill="none" stroke="#00f" stroke-width="2"/></svg></button>
    <button class="on" aria-label="Measure"><svg class="ico" viewBox="0 0 29 29"><path d="M2 14h25v4H2z"/><path d="M3 11v3M6 12v2M9 11v3M12 12v2M15 11v3M18 12v2M21 11v3M24 12v2M26 11v3" stroke="#000"/></svg></button>
    <button class="on" aria-label="Select area"><svg class="ico" viewBox="0 0 29 29"><path d="M4.500 4.500h20v21h-20z" fill="none" stroke="#000" stroke-dasharray="2 2"/><circle cx="15" cy="15" r="7"/></svg></button>
    <button aria-label="Connections"><svg class="ico" viewBox="0 0 29 29"><path d="M7 6v15h14" fill="none" stroke="#00f" stroke-width="3"/><circle cx="7" cy="6" r="4" fill="#00f"/><circle cx="7" cy="21" r="4" fill="#00f"/><circle cx="22" cy="21" r="4" fill="#00f"/><circle cx="22" cy="6" r="4" fill="#f00"/></svg></button>
    <button aria-label="Delete"><svg class="ico" viewBox="0 0 29 29"><circle cx="14" cy="14" r="5" fill="#00a"/><path d="M6 6l16 15M22 6L6 21" stroke="#000" stroke-width="2"/></svg></button>
    <button aria-label="Move"><svg class="ico" viewBox="0 0 29 29"><circle cx="22" cy="6" r="4" fill="#f00"/><circle cx="7" cy="21" r="4" fill="none" stroke="#00f" stroke-width="2"/><path d="M12 17l5-5M14 12h3v3" fill="none" stroke="#000"/></svg></button>
    <button aria-label="Copy"><svg class="ico" viewBox="0 0 29 29"><circle cx="22" cy="6" r="4" fill="#f00"/><circle cx="7" cy="21" r="5" fill="#00f"/><path d="M12 17l5-5M14 12h3v3" fill="none" stroke="#000"/></svg></button>
    <button aria-label="Rotate"><svg class="ico" viewBox="0 0 29 29" fill="none"><path d="M5 21L23 4" stroke="#f00" stroke-width="2"/><path d="M6 23h19" stroke="#00f" stroke-width="2"/><path d="M22 18l-4-5M18 16v-3h3" stroke="#000"/></svg></button>
    <button aria-label="Stretch"><svg class="ico" viewBox="0 0 29 29" fill="none"><path d="M13 12L23 4" stroke="#f00" stroke-width="2"/><path d="M5 21l8-9" stroke="#00f" stroke-width="2"/><path d="M15 19l4-5M16 14h3v3" stroke="#000"/></svg></button>
    <button aria-label="Undo"><svg class="ico" viewBox="0 0 29 29"><path d="M14 6q7 2 6 8t-8 6" fill="none" stroke="#000"/><path d="M10 20l5-4v7z"/></svg></button>
    <button aria-label="Mirror"><svg class="ico" viewBox="0 0 29 29" fill="none"><path d="M3 5h8v16M11 13H4" stroke="#00f" stroke-width="3"/><path d="M26 5h-8v16M18 13h6" stroke="#f00" stroke-width="3"/><path d="M14.500 2v24" stroke="#000"/></svg></button>
    <button aria-label="Change"><svg class="ico" viewBox="0 0 29 29" fill="none"><path d="M17 3h10v9H17z" fill="#f00"/><circle cx="22" cy="7" r="3" fill="#ddd"/><path d="M2.500 17.500h10v9h-10z" stroke="#00f"/><circle cx="7" cy="22" r="3" fill="#00f"/><path d="M13 17l3-3M14 14h2v2" stroke="#000"/></svg></button>
    <button aria-label="Break"><svg class="ico" viewBox="0 0 29 29"><path d="M5 14h19" stroke="#f00" stroke-width="3" stroke-linecap="round"/><path d="M12 14h5" stroke="#00f" stroke-width="3"/></svg></button>
    <button aria-label="Spacing"><svg class="ico" viewBox="0 0 29 29" fill="none"><path d="M4.500 4v22M25.500 4v22" stroke="#000"/><path d="M5 14.500h5M19 14.500h6M7 12l-2 2 2 2M23 12l2 2-2 2M10.500 9.500h8v9h-8zM13 11v3h4M16 11v6" stroke="#00f"/></svg></button>
    <button aria-label="Combine"><svg class="ico" viewBox="0 0 29 29"><path d="M5 5h12v5h8v17H13v-5H5z" fill="#00f"/><circle cx="9" cy="10" r="4" fill="#fff"/><circle cx="17" cy="19" r="5" fill="#fff"/></svg></button>
    <button aria-label="Triangle"><svg class="ico" viewBox="0 0 29 29" fill="none"><path d="M4 20L16 8l9 12" stroke="#f00" stroke-width="2"/><path d="M4 21h21" stroke="#00f" stroke-width="2"/><path d="M16 19v-6M14 15l2-2 2 2" stroke="#000"/></svg></button>
    <button aria-label="Peak"><svg class="ico" viewBox="0 0 29 29" fill="none"><path d="M3 27L14 2l12 25" stroke="#f00" stroke-width="2"/><path d="M5 28l10-10 10 10" stroke="#00f" stroke-width="2"/><path d="M15 16v-6M13 12l2-2 2 2" stroke="#000"/></svg></button>
    <button aria-label="Trapezoid"><svg class="ico" viewBox="0 0 29 29" fill="none"><path d="M5 19l4-13h11l5 13" stroke="#f00" stroke-width="3"/><path d="M1 28l4-9h20l3 9" stroke="#00f" stroke-width="2"/><path d="M15 16V9M13 11l2-2 2 2" stroke="#000"/></svg></button>
    <button aria-label="Trapezoid cut"><svg class="ico" viewBox="0 0 29 29" fill="none"><path d="M5 19l4-13h11l5 13" stroke="#f00" stroke-width="3"/><path d="M1 19h27" stroke="#00f" stroke-width="2"/><path d="M15 16V9M13 11l2-2 2 2M2 16l6 6M8 16l-6 6M21 16l6 6M27 16l-6 6" stroke="#000"/></svg></button>
    <button class="pick" aria-label="Select"><svg class="ico" viewBox="0 0 29 29"><path d="M10 5l9 7-3 1 4 8-3 1-4-8-3 2z"/></svg></button>
    <button class="pick" aria-label="Select frame"><svg class="ico" viewBox="0 0 29 29"><path d="M4 4h21v21H4z" fill="none" stroke="#e01000" stroke-width="2"/><path d="M10 5l9 7-3 1 4 8-3 1-4-8-3 2z"/></svg></button>
    <button class="pick" aria-label="Select polygon"><svg class="ico" viewBox="0 0 29 29"><path d="M10 4h15v21H10l-6-6V9z" fill="none" stroke="#e01000" stroke-width="2"/><path d="M10 5l9 7-3 1 4 8-3 1-4-8-3 2z"/></svg></button>
    <button class="pick" aria-label="Select net"><svg class="ico" viewBox="0 0 29 29"><path d="M6.500 0v16M6 24h7V13h4V7h6" fill="none" stroke="#000"/><circle cx="6" cy="16" r="2" fill="#f00" stroke="#000"/><circle cx="6" cy="24" r="2" fill="#0c0" stroke="#000"/><circle cx="23" cy="7" r="2" fill="#0c0" stroke="#000"/><path d="M17 11l9 7-3 1 4 7-3 1-3-7-3 2z"/></svg></button>
  </div>
  <div class="preview">
    <svg viewBox="1750 496 160 432" preserveAspectRatio="xMidYMid meet">
      <path fill="#f00" d="M1750 646h160v162h-160z"/><path fill="none" stroke="#4f8c28" d="M1910 601.500h-159.500v220.500h159.500"/>
      <path fill="none" stroke="#8fa8a8" stroke-width="2" d="M1770 652h108v147h-108z"/><path stroke="#20e0f0" stroke-width="2" d="M1771 799h106"/><path stroke="#40ffff" d="M1767 796l7 7M1774 796l-7 7"/>
    </svg>
  </div>
  <output class="coords">X = 36.222877mm<br>Y = 51.970865mm</output>
</aside>
</div>

<div class="prompt">
  <button class="cream" aria-label="Diagonal"><svg class="ico" viewBox="0 0 18 20"><path d="M4 4l10 12M4 8V4h4M14 12v4h-4" fill="none" stroke="#000"/></svg></button>
  <button class="cream" aria-label="Angle"><svg class="ico" viewBox="0 0 18 20"><path d="M3 16L15 3M3 16h12M5 4v4h3M9 11h3v4" fill="none" stroke="#000"/></svg></button>
  <button class="mint" aria-label="Grid"><svg class="ico" viewBox="0 0 18 20"><path d="M3 9l4-6h8v13H3zM9 3v13M3 9h12" fill="none" stroke="#000"/></svg></button>
  <label class="xy" for="xy">X Y :</label>
  <input id="xy" type="text">
  <button class="mint" aria-label="Alert"><svg class="ico" viewBox="0 0 18 20"><path d="M8 4h2v9H8zM8 15h2v2H8z"/></svg></button>
  <p class="message">&lt;M1&gt; – Select first area corner</p>
  <div class="units"><button>MM<i></i></button></div>
  <svg class="beam" width="8" height="16"><path d="M1 1h6M1 15h6M4 1v14" stroke="#000"/></svg>
</div>
<div class="statusline"><p>rout,#1,Line,XS=0,YS=1,XE=0,YE=106,r254,POS,Ang=-90</p></div>
</div>

<footer class="taskbar">
  <button class="orb" aria-label="Start"><svg width="38" height="38" viewBox="0 0 38 38"><defs><radialGradient id="orb" cy=".8"><stop offset="0" stop-color="#5fe0ff"/><stop offset=".6" stop-color="#2a78b8"/><stop offset="1" stop-color="#1c3f70"/></radialGradient></defs><circle cx="19" cy="19" r="18" fill="url(#orb)" stroke="#8fb4d0"/><path d="M5 12q14-14 28 0-14 6-28 0z" fill="#b9d8ea" opacity=".6"/><path d="M11 11q4-3 8 0l-2 7q-4-2-8 0z" fill="#f26a2a"/><path d="M20 12q4 2 8 0l-2 7q-4 2-8 0z" fill="#9bd44a"/><path d="M9 20q4-2 8 0l-2 7q-4-2-8 0z" fill="#4fb0f0"/><path d="M18 21q4 2 8 0l-2 7q-4 2-8 0z" fill="#ffd040"/></svg></button>
  <button aria-label="Shell"><svg viewBox="0 0 32 32"><path d="M16 3q14 2 14 13-4 9-11 13h-6Q2 22 1 15 4 4 16 3z" fill="#ffd28a"/><path d="M15 28L4 10M15 28L9 5M15 28V3M15 28L22 5M15 28L28 10" stroke="#e0a050"/><path d="M20 10l3 7 8 1-6 5 2 8-7-4-7 4 2-8-6-5 8-1z" fill="#f58a1e" stroke="#b85010"/></svg></button>
  <button aria-label="Notepad"><svg viewBox="0 0 32 32"><rect x="5" y="3" width="22" height="26" rx="2" fill="#e8f6fc" stroke="#8cc"/><path d="M7 7h18M7 11h18M7 15h18M7 19h18M7 23h18M7 27h18" stroke="#209cd0" stroke-width="2"/></svg></button>
  <button aria-label="Genesis launcher"><svg viewBox="0 0 32 32"><path d="M28 2q0 5-10 7-10 3-10 11 0 6 6 6 7 0 8-7h-7l3-4h10q-1 15-14 16Q3 31 3 20 4 6 18 4q6 0 10-2z" fill="#dd2a1a" stroke="#801008"/></svg></button>
  <button aria-label="Disk"><svg viewBox="0 0 32 32"><path d="M1 1h30v30H1z" fill="#2636c8"/><path d="M8 1h16v10H8z" fill="#c4c8d4"/><path d="M17 2h4v8h-4z" fill="#2636c8"/><path d="M5 15h22v16H5z" fill="#fff"/><path d="M7 19h18M7 24h9" stroke="#d04040"/><text x="17" y="29" font-size="8" font-family="Liberation Sans" fill="#000">64</text></svg></button>
  <button aria-label="P tool"><svg viewBox="0 0 32 32"><path d="M3 2h18M3 2l4 28M8 6v24" stroke="#1a7a40" fill="none"/><path d="M10 5h13q8 2 7 9t-8 8h-5v8h-6z" fill="#148a40"/><path d="M16 10h6q3 3 0 6h-6z" fill="#3e6a88"/></svg></button>
  <button aria-label="Word"><svg viewBox="0 0 32 32"><path d="M1 8l7-7h15v26H1z" fill="#d8e6f8" stroke="#2a5ca8"/><path d="M9 5l21 4v20L9 26z" fill="#f4f8ff" stroke="#3a6ab8"/><path d="M12 24h16M19 14h9M19 18h9" stroke="#3a6ab8" stroke-width="2"/><text x="4" y="21" font-size="16" font-weight="bold" font-family="Liberation Sans" fill="#1a4a98">W</text></svg></button>
  <button class="stack" aria-label="Excel"><svg viewBox="0 0 32 32"><path d="M1 8l7-7h15v26H1z" fill="#d8f0d8" stroke="#3a8a3a"/><path d="M10 8l20 3v19l-20-3z" fill="#f4fff4" stroke="#2a8a3a"/><path d="M12 20h17M12 25h17M18 13v16M24 13v16" stroke="#4aa84a"/><text x="4" y="21" font-size="18" font-weight="bold" font-family="Liberation Sans" fill="#187828">X</text></svg></button>
  <button aria-label="Genesis"><svg viewBox="0 0 32 32"><path d="M2 6q9-5 14 5" fill="none" stroke="#20b0a8" stroke-width="5"/><ellipse cx="18" cy="19" rx="13" ry="9" fill="#18807c" stroke="#304070" stroke-width="2"/><path d="M4 14q2 14 14 14" fill="none" stroke="#6080a0" stroke-width="2"/><ellipse cx="18" cy="17" rx="8" ry="6" fill="#40e0d0"/><ellipse cx="18" cy="17" rx="4" ry="4" fill="#d8c040"/><circle cx="18" cy="17" r="2" fill="#123"/></svg></button>
  <button class="active stack" aria-label="X server"><svg viewBox="0 0 32 32"><path d="M1 2h8l22 28h-8z" fill="#800080" stroke="#fff"/><path d="M28 2h2L4 30H2z" fill="#800080" stroke="#fff"/></svg></button>
  <button aria-label="Genesis 2"><svg viewBox="0 0 32 32"><path d="M3 6q9-4 14 5" fill="none" stroke="#20b0a8" stroke-width="5"/><ellipse cx="18" cy="20" rx="12" ry="8" fill="#18807c" stroke="#304070" stroke-width="2"/><ellipse cx="18" cy="19" rx="8" ry="5" fill="#40e0d0"/><path d="M10 18h5v3h-5zM19 16h5v3h-5z" fill="#e0d840"/><circle cx="18" cy="20" r="2" fill="#123"/></svg></button>
  <button aria-label="DingTalk"><svg viewBox="0 0 32 32"><rect x="3" y="2" width="27" height="28" rx="5" fill="#1890ff"/><path d="M10 7q12 3 13 9 0 3-3 5h3l-9 8 2-6h-3l1-3q-4-2-3-4l-1-1q-2-4 0-8z" fill="#fff"/></svg></button>
  <div class="tray">
    <svg width="18" height="16"><path d="M1 7h16v8H1z" fill="#ddd"/><path d="M3 9h12M3 11h12M5 13h8" stroke="#456" stroke-dasharray="2 1"/><path d="M3 5q4-4 6-1t6-3" fill="none" stroke="#ccc"/></svg>
    <svg class="raised" width="18" height="18"><circle cx="9" cy="9" r="8" fill="#1c28b8" stroke="#c8d0f0"/><path d="M6 7q0-3 3-3t3 3q0 1-3 3v1M9 13v2" fill="none" stroke="#fff" stroke-width="2"/></svg>
    <svg class="raised" width="10" height="20"><path d="M3.500 1.500h5v3h-5zM1.500 3.500h5v3h-5z" fill="#0a2a50" stroke="#fff"/><path d="M2 15h6l-3 3z" fill="#fff"/></svg>
    <svg width="10" height="10"><path d="M1 7l4-4 4 4z" fill="#fff"/></svg>
    <svg width="18" height="14"><path d="M0 12L12 1l-2 11z" fill="#e02020"/><path d="M12 2l5 10h-3l-3-5z" fill="#20c040"/></svg>
    <svg width="18" height="16"><path d="M2 1v14" stroke="#fff" stroke-width="2"/><path d="M4 2h8v7H4z" fill="#fff"/><circle cx="11" cy="11" r="5" fill="#d83020"/><path d="M9 9l4 4M13 9l-4 4" stroke="#fff" stroke-width="2"/></svg>
    <svg width="18" height="16"><path d="M1 5h3l5-4v14l-5-4H1z" fill="#fff"/><path d="M11 5q2 3 0 6M14 3q3 5 0 10" fill="none" stroke="#fff"/></svg>
    <svg width="14" height="16"><path d="M4.500 4.500h9v7h-9zM6 14h7M9 12v2M1 1v4h3V1M2.500 5v8h2" fill="none" stroke="#fff"/></svg>
    <time class="clock">19:53<br>2023/12/4</time>
  </div>
  <button class="desktop" aria-label="Show desktop"></button>
</footer>
</body>
</html>
```
FILE: styles.css
```css
* { box-sizing: border-box; }
html, body { height: 100%; margin: 0; }
body {
  display: flex;
  flex-direction: column;
  background: #000;
  color: #000;
  font: bold 12px/14px "Liberation Mono", "Courier New", monospace;
  overflow: hidden;
}
p, h1, h2 { margin: 0; font: inherit; }
button {
  margin: 0;
  padding: 0;
  border: 0;
  border-radius: 0;
  background: none;
  font: inherit;
  color: inherit;
}
svg { display: block; }

/* window frame */
.titlebar {
  display: flex;
  align-items: center;
  height: 29px;
  flex: none;
  border-top: 1px solid #1a2a44;
  border-bottom: 1px solid #cfe0f4;
  background:
    radial-gradient(ellipse 50px 8px at 845px 14px, #6a87b0, transparent),
    radial-gradient(ellipse 30px 10px at 950px 14px, #6a87b088, transparent),
    radial-gradient(ellipse 50px 8px at 1060px 14px, #6a87b088, transparent),
    radial-gradient(ellipse 20px 10px at 1475px 14px, #8a4a78aa, transparent),
    radial-gradient(ellipse 40px 12px at 1560px 14px, #6ea0d8aa, transparent),
    linear-gradient(90deg, #8fabdc, #7c97c8 340px, transparent 460px),
    linear-gradient(#1e3c70, #042c66 30%, #0e3a7a 60%, #7fa8e0 98%);
}
.title-text {
  flex: 1;
  font: 13px/16px "Noto Sans", sans-serif;
  text-shadow: 0 0 6px #dbe6f8, 0 0 10px #dbe6f8;
}
.app-icon { width: 12px; margin: 0 7px 0 -6px; }
.window-buttons {
  display: flex;
  align-self: flex-start;
  margin-right: 7px;
  border: 1px solid #8ea6cc;
  border-top: 0;
  border-radius: 0 0 5px 5px;
}
.window-buttons button {
  display: grid;
  place-items: center;
  width: 28px;
  height: 18px;
  background: linear-gradient(#4a6696, #26467c);
}
.window-buttons button + button { border-left: 1px solid #8ea6cc; }
.window-buttons .wide { width: 46px; }

.app {
  flex: 1;
  min-height: 0;
  display: flex;
  flex-direction: column;
  border-right: 8px solid #9dbbe6;
}

/* menu and brand strip */
.top { display: flex; height: 57px; flex: none; background: #9bdad9; }
.menubar {
  flex: 1;
  display: flex;
  align-items: center;
  gap: 18px;
  padding: 0 12px 0 8px;
  border-top: 3px solid #557f7e;
  border-bottom: 3px solid #557f7e;
  border-right: 2px solid #557f7e;
  box-shadow: inset 0 2px #c8f2f0, 0 -2px #c8f2f0 inset;
  font: bold 14px/18px "Liberation Serif", "Times New Roman", serif;
}
.menubar a { color: #000; text-decoration: none; }
.menubar u { text-underline-offset: 3px; }
.menubar .help { margin-left: auto; font-size: 15px; }
.brand {
  display: flex;
  align-items: center;
  gap: 2px;
  width: 413px;
  margin-left: 2px;
  padding-left: 4px;
  border: 2px solid #c8f2f0;
  border-top: 3px solid #557f7e;
  border-left: 2px solid #557f7e;
}
.logo-text { font: italic bold 32px "Liberation Sans", Arial, sans-serif; fill: #000080; }
.product { display: flex; flex-direction: column; align-items: center; font-family: "Liberation Serif", serif; }
.product strong { font-size: 24px; line-height: 26px; white-space: nowrap; }
.product em { font-size: 14px; line-height: 22px; }
.stamp { flex: 1; text-align: center; font: italic bold 15px/16px "Liberation Mono", monospace; align-self: flex-start; white-space: nowrap; padding-top: 3px; }

/* work area */
.main { flex: 1; min-height: 0; display: grid; grid-template-columns: 147px 1fr 164px; }
.left { display: flex; flex-direction: column; min-height: 0; background: #55d0b2; padding-top: 3px; border-right: 2px solid #a4ecd9; }
.job { margin-right: 1px; font-size: 15px; line-height: 18px; border-top: 1px solid #000; flex: none; }
.job div { height: 19px; text-indent: -1px; background: #9bdad9; border: 1px solid #000; border-width: 0 1px 1px 0; overflow: hidden; white-space: nowrap; }
.matrix { margin: 2px 1px 2px 0; padding: 2px 2px 2px 0; border: 1px solid #000; border-left: 0; flex: none; }
.matrix button {
  width: 100%;
  height: 21px;
  padding-left: 1px;
  text-align: left;
  font-size: 15px;
  line-height: 15px;
  background: #9bdad9;
  border: 2px solid;
  border-color: #c8f2f0 #557f7e #557f7e #9bdad9;
}
.layers {
  display: flex;
  flex-direction: column;
  gap: 3px;
  width: 121px;
  flex: none;
  padding: 2px 0 10px;
  border-top: 3px solid #2f6b5c;
  border-right: 2px solid #a4ecd9;
  border-bottom: 2px solid #a4ecd9;
  box-shadow: inset -1px -1px #000;
}
.group { width: 116px; background: #000; padding: 1px 0; }
.layer { display: grid; grid-template-columns: 14px 14px 81px; gap: 2px; height: 16px; padding: 1px 0 1px 1px; }
.layer input {
  appearance: none;
  width: 14px;
  height: 14px;
  margin: 0;
  border: 2px solid #fff;
  background: #fff;
  box-shadow: inset 0 0 0 2px #000;
}
.layer .current { border-color: #0000b0; }
.layer span { height: 14px; padding-left: 1px; line-height: 14px; background: #9bdad9; overflow: hidden; white-space: nowrap; }
.layer .white { background: #fff; }
.layer .green { background: #00a37c; }
.layer .amber { background: #ffc54c; }
.layer .slate { background: #9ab2be; }
.layer .pale { background: #dadada; }
.layer .work { display: flex; justify-content: space-between; align-items: center; padding-right: 1px; }
.layer .blue { background: #001eff; }
.layer .leaf { background: #419600; }
.layer .red { background: #f00; }
.filler { flex: 1; border-bottom: 2px solid #a4ecd9; }
.selected { padding: 3px 1px 2px 0; flex: none; border-bottom: 2px solid #000; }
.selected div { height: 19px; line-height: 18px; text-indent: -1px; background: #ffc54c; border: 1px solid #000; border-left: 0; }

/* board drawing */
.canvas { position: relative; min-width: 0; overflow: hidden; }
.board { width: 100%; shape-rendering: crispEdges; }
.green { fill: #419600; }
.black { fill: #000; }
.blue-fill { fill: #001eff; }
.blue-line { fill: none; stroke: #001eff; stroke-width: 2; }
.clearance { fill: #000; stroke: #000; stroke-width: 12; stroke-linejoin: round; }
.rout { fill: #000; stroke: #001eff; stroke-width: 2; }
.plate { fill: #ff22ff; stroke: #f00; stroke-width: 1; }
.dots { stroke: #41b9ff; stroke-linecap: round; }
.net { fill: none; stroke-linecap: round; stroke-linejoin: round; }
.wire { fill: none; stroke: #000; }
.part-no { font: 13px "Liberation Mono", monospace; fill: #6fae1e; }

/* popview window */
.popview {
  position: absolute;
  left: 1175px;
  top: 320px;
  width: 384px;
  padding: 0 5px 5px;
  border: 1px solid #c8c8c8;
  border-radius: 6px;
  background: linear-gradient(#606468, #9a9ea2 96px, #0a0c0e 97px, #0a0c0e);
}
.pop-head {
  display: flex;
  gap: 5px;
  height: 26px;
  align-items: center;
  background: linear-gradient(90deg, #8b8b8b, #8b8b8b 80px, #0c0f12 170px, #15181b 260px, #777 350px);
}
.pop-head h2 { flex: 1; font: 13px/16px "Noto Sans", sans-serif; text-shadow: 0 0 6px #ccc; }
.pop-x {
  align-self: flex-start;
  display: grid;
  place-items: center;
  width: 47px;
  height: 19px;
  border: 1px solid #e8c0b8;
  border-top: 0;
  border-radius: 0 0 5px 5px;
  background: linear-gradient(#d9a097, #c04a38 50%, #a02818 51%, #d06850);
}
.pop-body { border: 1px solid #ccc; padding: 1px; background: #000; }
.pop-row { display: flex; gap: 3px; }
.pop-view { flex: 1; min-width: 0; height: 251px; background: #000; border: 3px solid; border-color: #2f6b5c #a4ecd9 #a4ecd9 #2f6b5c; }
.pop-tools { display: flex; flex-direction: column; gap: 2px; width: 34px; padding-top: 1px; background: #000; }
.pop-tools button, .pop-close {
  background: #9bdad9;
  border: 3px solid;
  border-color: #7fdcc8 #4fb09c #4fb09c #7fdcc8;
}
.pop-tools button { display: grid; place-items: center; width: 33px; height: 33px; }
.pop-tools .ico { width: 22px; height: 22px; }
.pop-close { width: 100%; height: 28px; margin-top: 1px; font-size: 15px; line-height: 18px; }
.ico { outline: 1px solid #000; outline-offset: -1px; overflow: hidden; shape-rendering: crispEdges; }

/* tool palette */
.right { display: flex; flex-direction: column; min-height: 0; border-left: 2px solid #2f6b5c; }
.tools { display: grid; grid-template-columns: repeat(4, 38px); gap: 2px; padding: 2px 1px; flex: none; background: #000; border-right: 3px solid #6fa79c; }
.view-tools { padding-top: 3px; padding-bottom: 1px; border-bottom: 3px solid #a4ecd9; }
.edit-tools { padding-bottom: 1px; border-right-color: #666; border-bottom: 3px solid #666; }
.tools button {
  display: grid;
  place-items: center;
  height: 38px;
  border: 4px solid;
  background: #9bdad9;
  border-color: #b9eeea #648f8d #648f8d #b9eeea;
}
.tools .ico { width: 29px; height: 29px; }
.edit-tools button { background: #d0d0d0; border-color: #e6e6e6 #8c8c8c #8c8c8c #e6e6e6; }
.edit-tools .on { background: #fff; border-color: #fff #aaa #aaa #fff; }
.edit-tools .pick { background: #ffc54c; border-color: #ffe29c #ad7d26 #ad7d26 #ffe29c; }
.tools .hot { border-color: #b01818; }
.preview { flex: 1; min-height: 0; border: 2px solid; border-color: #2f6b5c #a4ecd9 #a4ecd9 #000; border-left: 0; }
.preview svg { width: 100%; height: 100%; }
.coords { flex: none; height: 45px; margin-bottom: 1px; padding: 6px 0 0 2px; background: #55d0b2; border: 2px solid; border-color: #2f6b5c #a4ecd9 #a4ecd9 #55d0b2; border-left: 0; font-size: 15px; line-height: 16px; white-space: nowrap; }

/* prompt and status rows */
.prompt { position: relative; display: flex; gap: 2px; height: 34px; flex: none; background: #000; border-top: 1px solid #000; border-bottom: 2px solid #000; }
.prompt .ico { width: 19px; height: 21px; }
.cream, .mint { display: grid; place-items: center; width: 29px; background: #ffffcd; border: 3px solid; border-color: #ffffe8 #a8a88c #a8a88c #ffffe8; }
.cream:first-child { width: 26px; margin-left: -1px; }
.mint { background: #e4e4b4; border-color: #55c0a8; }
.xy { width: 48px; margin-left: -2px; padding-left: 3px; line-height: 31px; background: #ffffcd; white-space: nowrap; }
.prompt input {
  width: 171px;
  padding: 0 4px;
  background: #ffffcd;
  border: 3px solid;
  border-color: #9a9a78 #d8d8b0 #d8d8b0 #9a9a78;
  border-radius: 0;
  font: inherit;
  outline: 0;
}
.beam { position: absolute; left: 140px; top: 3px; }
.message { flex: 1; line-height: 31px; padding-left: 2px; background: #ffffcd; white-space: nowrap; }
.units { width: 78px; padding: 2px 3px 2px 6px; background: #55d0b2; }
.units button { display: flex; justify-content: space-between; align-items: center; width: 100%; height: 27px; padding: 0 5px 0 4px; border: 2px solid; border-color: #a4ecd9 #2f8b78 #2f8b78 #a4ecd9; }
.units i { width: 12px; height: 7px; border: 2px solid; border-color: #a4ecd9 #2f8b78 #2f8b78 #a4ecd9; }
.statusline { height: 31px; flex: none; padding-bottom: 2px; border-top: 3px solid #557f7e; background: #e4ffff; }
.statusline p { height: 26px; line-height: 25px; text-align: center; background: #b3ffff; border: 1px solid #000; border-width: 0 1px 1px 0; box-shadow: inset -3px -2px #6aa8a8; }

/* taskbar */
.taskbar {
  display: flex;
  gap: 4px;
  height: 40px;
  flex: none;
  padding: 1px 0;
  border-top: 1px solid #41618c;
  background: linear-gradient(#143a64, #08264a 20%, #082a52);
}
.taskbar button { width: 58px; display: grid; place-items: center; border: 1px solid #7f97b8; border-radius: 3px; background: linear-gradient(135deg, #6f86a8, #34527e 50%, #1e3c68 51%, #2c4c7a); }
.taskbar button svg { width: 34px; height: 32px; }
.taskbar .orb { width: 54px; border: 0; background: none; margin-right: 2px; }
.taskbar .orb svg { width: 38px; height: 37px; }
.taskbar .stack { width: 51px; margin-right: 7px; box-shadow: 2px 0 #1e3c68, 3px 0 #7f97b8, 5px 0 #1e3c68, 6px 0 #7f97b8; }
.taskbar .active { background: linear-gradient(135deg, #d4dce8, #8a9cb8 50%, #6c82a4); border-color: #dfe8f4; }
.tray { margin-left: auto; display: flex; align-items: center; gap: 9px; color: #fff; }
.tray .raised { margin-bottom: 6px; }
.clock { padding-left: 8px; text-align: center; font: 12px/18px "Noto Sans", sans-serif; }
.taskbar .desktop { width: 14px; margin-left: 8px; }
```
